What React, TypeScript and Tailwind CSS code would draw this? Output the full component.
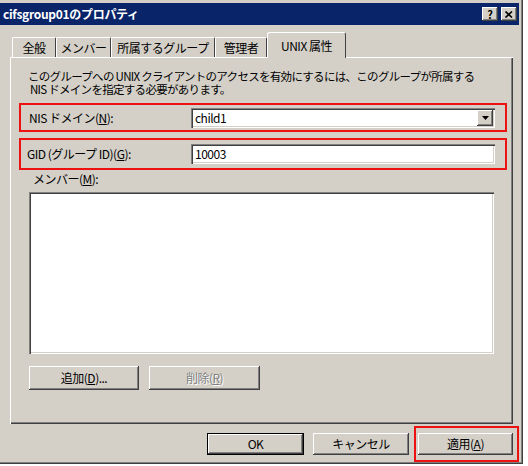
import React from "react";

const raised =
  "shadow-[inset_-1px_-1px_#404040,inset_1px_1px_#ffffff,inset_-2px_-2px_#808080,inset_2px_2px_#d4d0c8]";
const sunken =
  "shadow-[inset_1px_1px_#808080,inset_2px_2px_#404040,inset_-1px_-1px_#ffffff,inset_-2px_-2px_#d4d0c8]";

function Tab({ label, w, active }: { label: string; w: string; active?: boolean }) {
  if (active) {
    return (
      <div
        className={`relative z-10 -mb-px ${w} h-[26px] bg-[#d4d0c8] border-t border-l border-white border-r border-r-[#404040] rounded-t-[3px] flex items-center justify-center`}
      >
        {label}
      </div>
    );
  }
  return (
    <div
      className={`${w} h-[20px] mt-[5px] border-t border-l border-white border-r border-r-[#404040] rounded-t-[2px] flex items-center justify-center`}
    >
      {label}
    </div>
  );
}

function Btn({ children, w, disabled, isDefault }: { children: React.ReactNode; w: string; disabled?: boolean; isDefault?: boolean }) {
  return (
    <div className={`${w} ${isDefault ? "border border-black" : ""}`}>
      <div
        className={`h-full w-full flex items-center justify-center bg-[#d4d0c8] ${raised} ${
          disabled ? "text-[#808080] [text-shadow:1px_1px_0_#ffffff]" : "text-black"
        }`}
      >
        {children}
      </div>
    </div>
  );
}

export default function App() {
  return (
    <div
      className="w-[528px] h-[466px] bg-white text-[12px] text-black"
      style={{ fontFamily: '"Noto Sans CJK JP", "Liberation Sans", sans-serif' }}
    >
      <div className="w-[523px] h-[464px] bg-[#d4d0c8] shadow-[inset_-1px_-1px_#404040,inset_-2px_-2px_#808080] flex flex-col">
        {/* Title bar */}
        <div className="mt-[3px] w-[519px] h-[22px] bg-[#0a246a] flex items-center pl-[3px] pr-[2px]">
          <span className="text-white font-bold text-[12px] tracking-[-0.3px]">cifsgroup01のプロパティ</span>
          <div className="ml-auto flex gap-[3px]">
            <div className={`w-[16px] h-[14px] bg-[#d4d0c8] ${raised} flex items-center justify-center text-[11px] font-bold leading-none`}>
              ?
            </div>
            <div className={`w-[16px] h-[14px] bg-[#d4d0c8] ${raised} flex items-center justify-center`}>
              <svg width="8" height="7" viewBox="0 0 8 7">
                <path d="M0.5 0.5 L7 6.5 M7 0.5 L0.5 6.5" stroke="#000" strokeWidth="1.6" />
              </svg>
            </div>
          </div>
        </div>

        {/* Tabs */}
        <div className="mt-[7px] ml-[12px] flex items-start h-[25px] text-[12px] tracking-[-0.5px]">
          <Tab label="全般" w="w-[44px]" />
          <Tab label="メンバー" w="w-[55px]" />
          <Tab label="所属するグループ" w="w-[104px]" />
          <Tab label="管理者" w="w-[52px]" />
          <Tab label="UNIX 属性" w="w-[79px]" active />
        </div>

        {/* Tab panel */}
        <div className="ml-[10px] w-[503px] h-[367px] border-t border-l border-white shadow-[inset_-1px_-1px_#404040,inset_-2px_-2px_#808080] flex flex-col">
          <p className="mt-[12px] ml-[17px] text-[11.5px] leading-[13px] tracking-[-0.7px]">
            このグループへの UNIX クライアントのアクセスを有効にするには、このグループが所属する
            <br />
            &nbsp;NIS ドメインを指定する必要があります。
          </p>

          <div className="mt-[7px] ml-[8px] w-[488px] h-[29px] border-2 border-[#ee1111] flex items-center tracking-[-0.5px]">
            <span className="ml-[8px] w-[162px]">
              NIS ドメイン(<u>N</u>):
            </span>
            <div className={`w-[304px] h-[20px] bg-white ${sunken} flex items-center pl-[4px] pr-[2px]`}>
              <span>child1</span>
              <div className={`ml-auto w-[16px] h-[16px] bg-[#d4d0c8] ${raised} flex items-center justify-center`}>
                <svg width="7" height="4" viewBox="0 0 7 4">
                  <path d="M0 0 H7 L3.5 4 Z" fill="#000" />
                </svg>
              </div>
            </div>
          </div>

          <div className="mt-[6px] ml-[8px] w-[488px] h-[32px] border-2 border-[#ee1111] flex items-center tracking-[-0.5px]">
            <span className="ml-[6px] w-[164px]">
              GID (グループ ID)(<u>G</u>):
            </span>
            <div className={`w-[304px] h-[20px] bg-white ${sunken} flex items-center pl-[4px]`}>
              <span>10003</span>
            </div>
          </div>

          <span className="mt-[3px] ml-[22px] leading-[12px] tracking-[-0.5px]">
            メンバー(<u>M</u>):
          </span>
          <div className={`mt-[7px] ml-[18px] w-[465px] h-[162px] bg-white ${sunken}`} />

          <div className="mt-[12px] ml-[18px] flex gap-[10px] tracking-[-0.5px]">
            <Btn w="w-[110px] h-[24px]">
              追加(<u>D</u>)...
            </Btn>
            <Btn w="w-[111px] h-[24px]" disabled>
              削除(<u>R</u>)
            </Btn>
          </div>
        </div>

        {/* Dialog buttons */}
        <div className="mt-[2px] ml-[207px] flex items-start tracking-[-0.5px]">
          <div className="mt-[7px]">
            <Btn w="w-[97px] h-[22px]" isDefault>
              OK
            </Btn>
          </div>
          <div className="mt-[7px] ml-[9px]">
            <Btn w="w-[96px] h-[22px]">キャンセル</Btn>
          </div>
          <div className="ml-[5px] w-[105px] h-[36px] border-2 border-[#ee1111] pl-[2px] pt-[5px]">
            <Btn w="w-[95px] h-[22px]">
              適用(<u>A</u>)
            </Btn>
          </div>
        </div>
      </div>
    </div>
  );
}
